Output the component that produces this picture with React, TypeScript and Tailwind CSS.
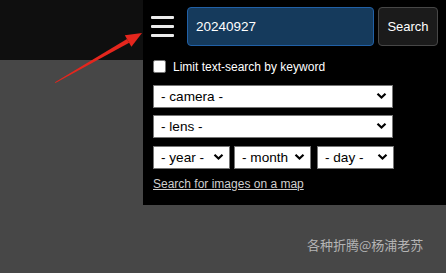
import { useState } from "react";

type Option = {
    label: string;
    width: string;
}

const dateFields: Option[] = [
    { label: "- year -", width: "w-[77px]" },
    { label: "- month -", width: "w-[77px]" },
    { label: "- day -", width: "w-[77px]" },
];

const Chevron = () => (
    <svg className="pointer-events-none absolute right-[6px] top-1/2 -translate-y-1/2" width="11" height="8" viewBox="0 0 11 8">
        <path d="M1.5 1.8 L5.5 5.6 L9.5 1.8" fill="none" stroke="#000" strokeWidth="2.2" />
    </svg>
);

const Select = ({ label, width }: Option) => (
    <div className={`relative h-[23px] ${width}`}>
        <select className="h-full w-full appearance-none rounded-none border border-[#767676] bg-white pl-[7px] pr-5 text-[13.6px] leading-none text-black outline-none">
            <option>{label}</option>
        </select>
        <Chevron />
    </div>
);

const App = () => {
    const [query, setQuery] = useState("20240927");
    const [limit, setLimit] = useState(false);

    return (
        <div className="relative h-[273px] w-[446px] overflow-hidden bg-[#474747] font-['Liberation_Sans',Arial,sans-serif]">
            <div className="h-[60px] w-full bg-[#0f0f0f]" />

            {/* dropdown search panel */}
            <div className="absolute right-0 top-0 flex h-[205px] w-[303px] flex-col bg-black pl-[10px]">
                <div className="mt-[7px] flex h-[39px] items-center">
                    <button className="-ml-[2px] flex h-[39px] w-[23px] flex-col justify-center gap-[6px]">
                        <span className="block h-[3px] w-[23px] rounded-[1px] bg-[#ececec]" />
                        <span className="block h-[3px] w-[23px] rounded-[1px] bg-[#ececec]" />
                        <span className="block h-[3px] w-[23px] rounded-[1px] bg-[#ececec]" />
                    </button>
                    <input
                        value={query}
                        onChange={e => setQuery(e.target.value)}
                        className="ml-[13px] h-[39px] w-[187px] rounded-[4px] border border-[#2160a6] bg-[#153a5c] pl-[8px] text-[13.5px] text-white outline-none"
                    />
                    <button className="ml-[4px] h-[39px] w-[60px] rounded-[4px] border border-[#474747] bg-[#1b1b1b] text-[13px] text-white">
                        Search
                    </button>
                </div>

                <label className="mt-[14px] flex h-[13px] items-center">
                    <input
                        type="checkbox"
                        checked={limit}
                        onChange={() => setLimit(!limit)}
                        className="h-[13px] w-[13px] appearance-none rounded-[2px] border border-[#767676] bg-white"
                    />
                    <span className="ml-[7px] text-[12px] leading-none text-white">Limit text-search by keyword</span>
                </label>

                <div className="mt-[11px] flex flex-col gap-[7px]">
                    <Select label="- camera -" width="w-[240px]" />
                    <Select label="- lens -" width="w-[240px]" />
                    <div className="mt-px flex gap-[4px]">
                        {dateFields.map((field, idx) => (
                            <div key={idx} className={idx === 2 ? "ml-[2px]" : ""}>
                                <Select label={field.label} width={field.width} />
                            </div>
                        ))}
                    </div>
                </div>

                <a href="#" className="mt-[9px] text-[12px] leading-[14px] text-[#cfcfcf] underline">
                    Search for images on a map
                </a>
            </div>

            {/* annotation arrow */}
            <svg className="absolute left-0 top-0" width="160" height="100" viewBox="0 0 160 100">
                <polygon points="55,82.2 127,38.9 129.2,42.8 55.4,82.9" fill="#e5261d" />
                <polygon points="142,33 124.8,35.2 131.4,46.8" fill="#e5261d" />
            </svg>

            <div className="absolute left-[307px] top-[236px] text-[13px] leading-[18px] text-[#b4b4b4] font-['Noto_Sans_CJK_SC',sans-serif]">
                各种折腾@杨浦老苏
            </div>
        </div>
    );
}

export default App;
